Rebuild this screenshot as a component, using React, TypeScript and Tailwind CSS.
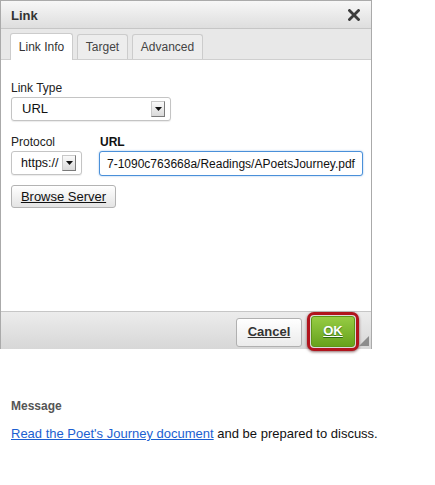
import React from "react";

function Arrow() {
  return (
    <div className="shrink-0 w-[14px] h-[16px] flex items-center justify-center bg-gradient-to-b from-[#fafafa] to-[#d9d9d9] border border-[#c8c8c8] border-r-[#7a7a7a] border-b-[#7a7a7a]">
      <svg width="7" height="4" viewBox="0 0 7 4">
        <path d="M0 0 L7 0 L3.5 4 Z" fill="#111" />
      </svg>
    </div>
  );
}

export default function App() {
  const font = { fontFamily: '"Liberation Sans", Arial, Helvetica, sans-serif' };
  return (
    <div className="w-[435px] h-[485px] bg-white text-[#222]" style={font}>
      <div className="w-[372px] border border-[#aaaaaa] border-b-0 bg-white">
        {/* Title bar */}
        <div className="h-[28px] flex items-center justify-between pl-[10px] pr-[11px] bg-gradient-to-b from-[#f7f7f7] to-[#dedede] border-b border-[#c6c6c6]">
          <span className="text-[13px] font-bold text-[#333] leading-none pt-[1px]">Link</span>
          <svg width="12" height="12" viewBox="0 0 12 12" className="mt-[1px]">
            <path d="M1.5 1.5 L10.5 10.5 M10.5 1.5 L1.5 10.5" stroke="#3c3c3c" strokeWidth="2.8" strokeLinecap="square" />
          </svg>
        </div>
        {/* Tabs */}
        <div className="h-[31px] flex items-end gap-[4px] pl-[9px] bg-[#e8e8e8] border-b border-[#cfcfcf]">
          <div className="relative -mb-px h-[27px] w-[63px] flex items-center justify-center bg-white border border-[#cccccc] border-b-0 rounded-t-[3px] text-[12px] text-[#333]">
            Link Info
          </div>
          <div className="h-[25px] w-[51px] flex items-center justify-center bg-[#ededed] border border-[#cccccc] border-b-0 rounded-t-[3px] text-[12px] text-[#444]">
            Target
          </div>
          <div className="h-[25px] w-[71px] flex items-center justify-center bg-[#ededed] border border-[#cccccc] border-b-0 rounded-t-[3px] text-[12px] text-[#444]">
            Advanced
          </div>
        </div>
        {/* Body */}
        <div className="h-[251px] pl-[10px] pt-[21px] bg-white">
          <div className="text-[12px] leading-[15px] text-[#222]">Link Type</div>
          <div className="mt-[1px] w-[160px] h-[24px] flex items-center justify-between pl-[10px] pr-[5px] border border-[#c4c4c4] rounded-[3px] bg-white shadow-[0_1px_1px_rgba(0,0,0,0.08)]">
            <span className="text-[13px] text-[#111]">URL</span>
            <Arrow />
          </div>
          <div className="mt-[14px] flex gap-[17px]">
            <div className="flex flex-col">
              <div className="text-[12px] leading-[15px] text-[#222]">Protocol</div>
              <div className="mt-[1px] w-[71px] h-[24px] flex items-center justify-between pl-[9px] pr-[5px] border border-[#c4c4c4] rounded-[3px] bg-white shadow-[0_1px_1px_rgba(0,0,0,0.08)]">
                <span className="text-[12.5px] text-[#111] whitespace-nowrap">https://</span>
                <Arrow />
              </div>
            </div>
            <div className="flex flex-col">
              <div className="pl-[1px] text-[12px] leading-[15px] font-bold text-[#111]">URL</div>
              <div className="mt-[1px] w-[264px] h-[25px] flex items-center pl-[7px] overflow-hidden whitespace-nowrap border border-[#4a90d9] rounded-[3px] bg-white shadow-[0_0_2px_rgba(74,144,217,0.6)]">
                <span className="text-[12px] text-[#111]">7-1090c763668a/Readings/APoetsJourney.pdf</span>
              </div>
            </div>
          </div>
          <div className="mt-[9px] w-[105px] h-[23px] flex items-center justify-center border border-[#b3b3b3] rounded-[3px] bg-gradient-to-b from-[#ffffff] to-[#e4e4e4] text-[13px] text-[#111] underline">
            Browse Server
          </div>
        </div>
        {/* Footer */}
        <div className="relative h-[38px] flex items-center justify-end gap-[5px] pr-[12px] border-t border-[#c6c6c6] bg-gradient-to-b from-[#ececec] to-[#d7d7d7]">
          <div className="w-[66px] h-[29px] mt-[3px] flex items-center justify-center border border-[#b0b0b0] rounded-[3px] bg-gradient-to-b from-[#ffffff] to-[#ebebeb] text-[13px] font-bold text-[#333] underline">
            Cancel
          </div>
          <div className="w-[52px] h-[39px] mt-[1px] p-[1px] border-[3px] border-[#b1141d] rounded-[7px] bg-[#dcdcdc] shadow-[0_1px_3px_rgba(60,0,0,0.6)]">
            <div className="w-full h-full flex items-center justify-center rounded-[3px] border border-[#5e9518] bg-gradient-to-b from-[#96cc43] to-[#67a21b] text-[13px] font-bold text-white underline [text-shadow:0_1px_1px_rgba(0,60,0,0.6)]">
              OK
            </div>
          </div>
          <svg width="10" height="10" viewBox="0 0 10 10" className="absolute right-[2px] bottom-[3px]">
            <path d="M10 0 L10 10 L0 10 Z" fill="#8c8c8c" />
          </svg>
        </div>
      </div>
      {/* Below */}
      <div className="pl-[11px] pt-[50px]">
        <div className="text-[12px] font-bold text-[#555] leading-[15px]">Message</div>
        <div className="mt-[12px] text-[13px] leading-[16px] text-[#111]">
          <a className="text-[#1c5fd1] underline" href="#">Read the Poet's Journey document</a> and be prepared to discuss.
        </div>
      </div>
    </div>
  );
}
